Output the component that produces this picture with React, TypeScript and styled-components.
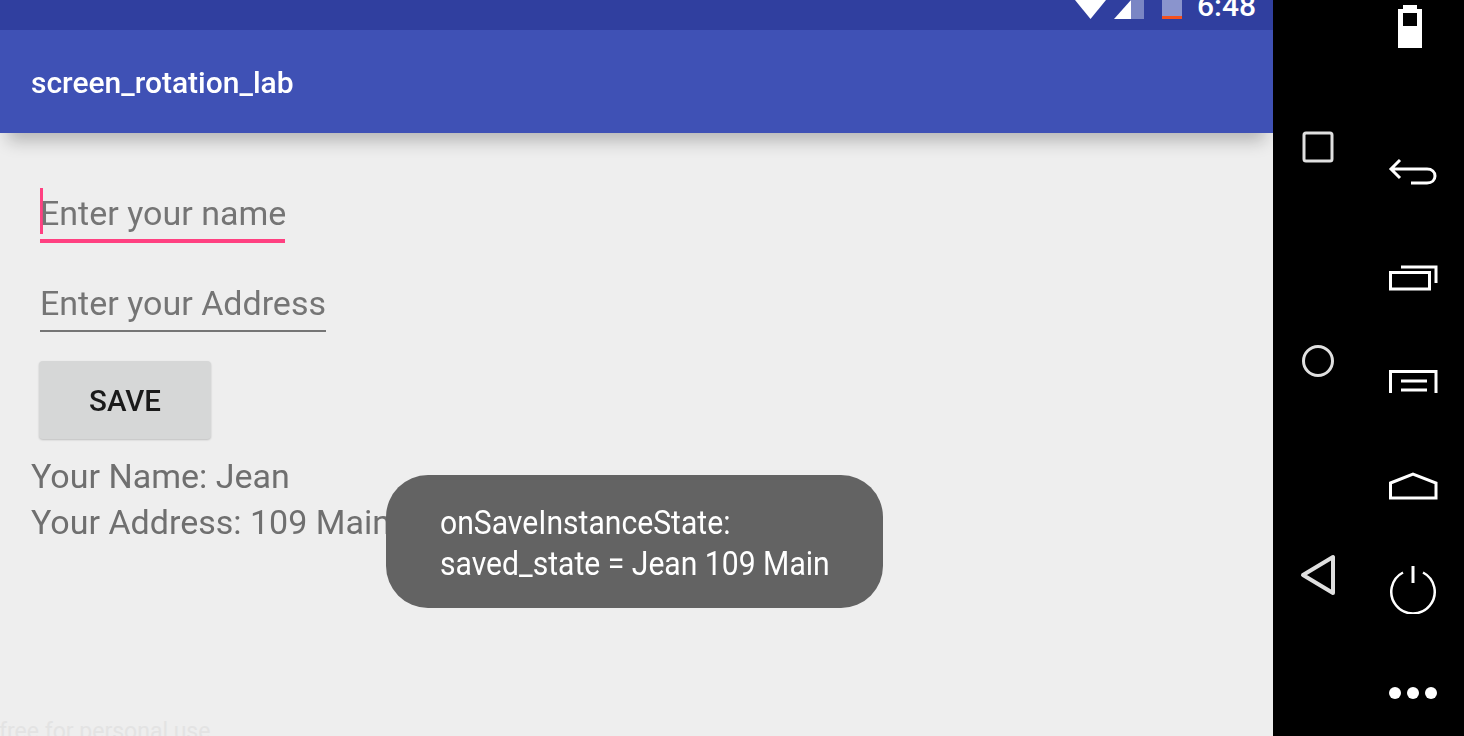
import { createGlobalStyle, styled } from 'styled-components';

const GlobalStyle = createGlobalStyle`
  html, body {
    margin: 0;
    padding: 0;
    height: 100%;
    overflow: hidden;
    background: #000;
    font-family: Roboto, "Noto Sans", sans-serif;
  }
`;

const App = () => {
  return (
    <Page>
      <GlobalStyle />
      <Screen>
        <StatusBar>
          <svg width="31" height="19" viewBox="0 0 31 19">
            <polygon points="0,0 31,0 15.5,19" fill="#fff" />
          </svg>
          <SignalIcon width="30" height="19" viewBox="0 0 30 19">
            <polygon points="17,0 30,0 30,19 17,19" fill="#7a86c4" />
            <polygon points="17,0 17,19 0,19" fill="#fff" />
          </SignalIcon>
          <BatteryIcon width="20" height="19" viewBox="0 0 20 19">
            <rect x="0" y="0" width="20" height="16" fill="#8a94cd" />
            <rect x="0" y="16" width="20" height="3" fill="#f4511e" />
          </BatteryIcon>
          <Clock>6:48</Clock>
        </StatusBar>
        <AppBar>
          <Title>screen_rotation_lab</Title>
        </AppBar>
        <Content>
          <Field $width={245} $focused placeholder="Enter your name" />
          <FieldGap />
          <Field $width={286} placeholder="Enter your Address" />
          <SaveButton>SAVE</SaveButton>
          <Result>Your Name: Jean</Result>
          <Result>Your Address: 109 Main</Result>
        </Content>
        <Toast>
          <ToastLine>onSaveInstanceState:</ToastLine>
          <ToastLine>saved_state = Jean 109 Main</ToastLine>
        </Toast>
        <Watermark>free for personal use</Watermark>
      </Screen>
      <SideBar>
        <NavColumn $width={89}>
          <NavIcon $top={131} width="32" height="32" viewBox="0 0 32 32">
            <rect x="2" y="2" width="28" height="28" rx="2" fill="none" stroke="#e0e0e0" strokeWidth="3" />
          </NavIcon>
          <NavIcon $top={181} width="34" height="34" viewBox="0 0 34 34">
            <circle cx="17" cy="17" r="14.5" fill="none" stroke="#e0e0e0" strokeWidth="3" />
          </NavIcon>
          <NavIcon $top={175} width="38" height="44" viewBox="0 0 38 44">
            <polygon points="4,22 34,4 34,40" fill="none" stroke="#e0e0e0" strokeWidth="4" strokeLinejoin="round" />
          </NavIcon>
        </NavColumn>
        <NavColumn $width={102}>
          <NavIcon $top={5} $shift={-6} width="24" height="43" viewBox="0 0 24 43">
            <path d="M5 0H19V4H24V43H0V4H5Z M5 8V21H19V8Z" fill="#fff" fillRule="evenodd" />
          </NavIcon>
          <NavIcon $top={110} width="50" height="28" viewBox="0 0 50 28">
            <path
              d="M12 2L3 11L12 20M3 11H39C44 11 47 14 47 18C47 22 44 25 39 25H23"
              fill="none"
              stroke="#fff"
              strokeWidth="3"
            />
          </NavIcon>
          <NavIcon $top={78} width="50" height="27" viewBox="0 0 50 27">
            <path d="M13 3H48V19M2.5 8.5H41.5V25H2.5Z" fill="none" stroke="#fff" strokeWidth="3" />
          </NavIcon>
          <NavIcon $top={77} width="50" height="25" viewBox="0 0 50 25">
            <path d="M2.5 25V3.5H48V25M13 13H39M13 22H39" fill="none" stroke="#fff" strokeWidth="3" />
          </NavIcon>
          <NavIcon $top={79} width="50" height="28" viewBox="0 0 50 28">
            <path d="M2.5 11L25 2L48 11V26H2.5Z" fill="none" stroke="#fff" strokeWidth="3" />
          </NavIcon>
          <NavIcon $top={64} width="50" height="50" viewBox="0 0 50 50">
            <path d="M15 8.5A21.7 21.7 0 1 0 35 8.5" fill="none" stroke="#fff" strokeWidth="2.5" />
            <path d="M25 2V19" fill="none" stroke="#fff" strokeWidth="3" />
          </NavIcon>
          <NavIcon $top={72} width="50" height="14" viewBox="0 0 50 14">
            <circle cx="7" cy="7" r="6" fill="#fff" />
            <circle cx="25" cy="7" r="6" fill="#fff" />
            <circle cx="43" cy="7" r="6" fill="#fff" />
          </NavIcon>
        </NavColumn>
      </SideBar>
    </Page>
  );
};

export default App;

const Page = styled.div`
  display: flex;
  width: 1464px;
  height: 736px;
  overflow: hidden;
`;

const Screen = styled.div`
  position: relative;
  display: flex;
  flex-direction: column;
  width: 1273px;
  height: 736px;
  overflow: hidden;
  background-color: #eeeeee;
`;

const StatusBar = styled.div`
  display: flex;
  justify-content: flex-end;
  align-items: flex-start;
  flex-shrink: 0;
  height: 30px;
  padding-right: 17px;
  box-sizing: border-box;
  overflow: hidden;
  background-color: #303f9f;
`;

const SignalIcon = styled.svg`
  margin-left: 8px;
`;

const BatteryIcon = styled.svg`
  margin-left: 18px;
`;

const Clock = styled.div`
  margin: -14px 0 0 15px;
  font-size: 30px;
  line-height: 40px;
  font-weight: 500;
  color: #fff;
`;

const AppBar = styled.header`
  position: relative;
  z-index: 1;
  display: flex;
  align-items: center;
  flex-shrink: 0;
  height: 103px;
  padding-left: 31px;
  background-color: #3f51b5;
  box-shadow: 0 16px 16px -8px rgba(0, 0, 0, 0.24);
`;

const Title = styled.div`
  margin-top: 2px;
  font-size: 30px;
  font-weight: 500;
  color: #fff;
  filter: blur(0.3px);
`;

const Content = styled.main`
  display: flex;
  flex-direction: column;
  align-items: flex-start;
  padding: 55px 0 0 40px;
  filter: blur(0.3px);
`;

const Field = styled.input<{ $width: number; $focused?: boolean }>`
  display: block;
  width: ${p => p.$width}px;
  height: 55px;
  box-sizing: border-box;
  padding: 0 0 2px;
  border: none;
  border-bottom: ${p => (p.$focused ? '4px solid #ff4081' : '2px solid #757575')};
  outline: none;
  background:
    ${p => (p.$focused ? 'linear-gradient(#ff4081, #ff4081) left top / 3px 46px no-repeat' : 'none')};
  font-family: Roboto, sans-serif;
  font-size: 34px;
  color: #757575;

  &::placeholder {
    color: #757575;
    opacity: 1;
  }
`;

const FieldGap = styled.div`
  height: 34px;
`;

const SaveButton = styled.button`
  width: 172px;
  height: 78px;
  margin: 29px 0 14px -1px;
  padding: 2px 0 0;
  border: none;
  border-radius: 4px;
  background-color: #d6d7d7;
  box-shadow: 0 1px 2px rgba(0, 0, 0, 0.2);
  font-family: Roboto, sans-serif;
  font-size: 29.5px;
  font-weight: 500;
  color: #1a1a1a;
`;

const Result = styled.div`
  margin-left: -9px;
  font-size: 34px;
  line-height: 46px;
  color: #6f6f6f;
`;

const Toast = styled.div`
  position: absolute;
  left: 386px;
  top: 475px;
  display: flex;
  flex-direction: column;
  justify-content: center;
  width: 497px;
  height: 133px;
  padding: 3px 0 0 54px;
  box-sizing: border-box;
  border-radius: 42px;
  background-color: #636363;
`;

const ToastLine = styled.div`
  font-size: 34px;
  line-height: 41px;
  white-space: nowrap;
  color: #fff;
  transform: scaleX(0.886);
  transform-origin: left center;
`;

const Watermark = styled.div`
  position: absolute;
  left: -1px;
  top: 719px;
  font-size: 23px;
  line-height: 26px;
  color: #e3e3e3;
`;

const SideBar = styled.aside`
  display: flex;
  width: 191px;
  height: 736px;
  background-color: #000;
`;

const NavColumn = styled.div<{ $width: number }>`
  display: flex;
  flex-direction: column;
  align-items: center;
  width: ${p => p.$width}px;
`;

const NavIcon = styled.svg<{ $top: number; $shift?: number }>`
  flex-shrink: 0;
  margin-top: ${p => p.$top}px;
  margin-left: ${p => p.$shift ?? 0}px;
`;
